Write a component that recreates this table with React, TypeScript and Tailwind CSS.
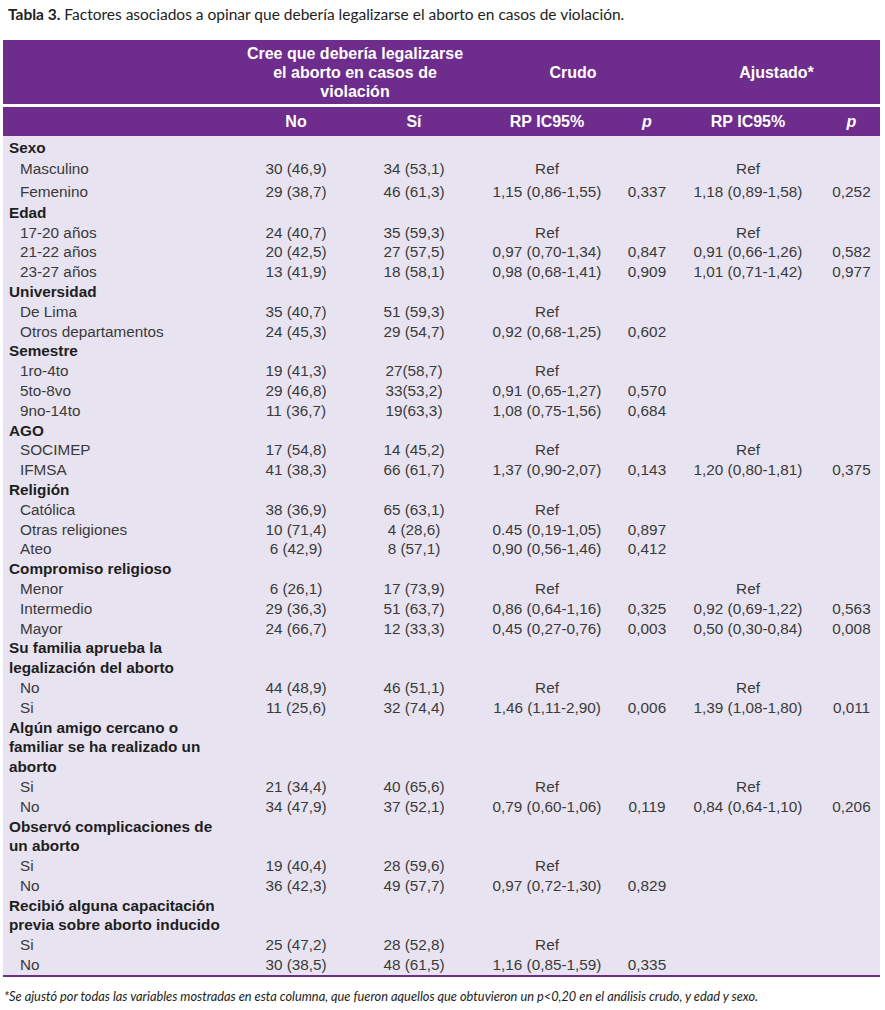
import React from 'react';

type Row =
  | { cat: string[] }
  | { label: string; no: string; si: string; rp1?: string; p1?: string; rp2?: string; p2?: string; h?: string };

const rows: Row[] = [
  { cat: ['Sexo'] },
  { label: 'Masculino', no: '30 (46,9)', si: '34 (53,1)', rp1: 'Ref', rp2: 'Ref', h: 'h-[23px]' },
  { label: 'Femenino', no: '29 (38,7)', si: '46 (61,3)', rp1: '1,15 (0,86-1,55)', p1: '0,337', rp2: '1,18 (0,89-1,58)', p2: '0,252', h: 'h-[22px]' },
  { cat: ['Edad'] },
  { label: '17-20 años', no: '24 (40,7)', si: '35 (59,3)', rp1: 'Ref', rp2: 'Ref' },
  { label: '21-22 años', no: '20 (42,5)', si: '27 (57,5)', rp1: '0,97 (0,70-1,34)', p1: '0,847', rp2: '0,91 (0,66-1,26)', p2: '0,582' },
  { label: '23-27 años', no: '13 (41,9)', si: '18 (58,1)', rp1: '0,98 (0,68-1,41)', p1: '0,909', rp2: '1,01 (0,71-1,42)', p2: '0,977' },
  { cat: ['Universidad'] },
  { label: 'De Lima', no: '35 (40,7)', si: '51 (59,3)', rp1: 'Ref' },
  { label: 'Otros departamentos', no: '24 (45,3)', si: '29 (54,7)', rp1: '0,92 (0,68-1,25)', p1: '0,602' },
  { cat: ['Semestre'] },
  { label: '1ro-4to', no: '19 (41,3)', si: '27(58,7)', rp1: 'Ref' },
  { label: '5to-8vo', no: '29 (46,8)', si: '33(53,2)', rp1: '0,91 (0,65-1,27)', p1: '0,570' },
  { label: '9no-14to', no: '11 (36,7)', si: '19(63,3)', rp1: '1,08 (0,75-1,56)', p1: '0,684' },
  { cat: ['AGO'] },
  { label: 'SOCIMEP', no: '17 (54,8)', si: '14 (45,2)', rp1: 'Ref', rp2: 'Ref' },
  { label: 'IFMSA', no: '41 (38,3)', si: '66 (61,7)', rp1: '1,37 (0,90-2,07)', p1: '0,143', rp2: '1,20 (0,80-1,81)', p2: '0,375' },
  { cat: ['Religión'] },
  { label: 'Católica', no: '38 (36,9)', si: '65 (63,1)', rp1: 'Ref' },
  { label: 'Otras religiones', no: '10 (71,4)', si: '4 (28,6)', rp1: '0.45 (0,19-1,05)', p1: '0,897' },
  { label: 'Ateo', no: '6 (42,9)', si: '8 (57,1)', rp1: '0,90 (0,56-1,46)', p1: '0,412' },
  { cat: ['Compromiso religioso'] },
  { label: 'Menor', no: '6 (26,1)', si: '17 (73,9)', rp1: 'Ref', rp2: 'Ref' },
  { label: 'Intermedio', no: '29 (36,3)', si: '51 (63,7)', rp1: '0,86 (0,64-1,16)', p1: '0,325', rp2: '0,92 (0,69-1,22)', p2: '0,563' },
  { label: 'Mayor', no: '24 (66,7)', si: '12 (33,3)', rp1: '0,45 (0,27-0,76)', p1: '0,003', rp2: '0,50 (0,30-0,84)', p2: '0,008' },
  { cat: ['Su familia aprueba la', 'legalización del aborto'] },
  { label: 'No', no: '44 (48,9)', si: '46 (51,1)', rp1: 'Ref', rp2: 'Ref' },
  { label: 'Si', no: '11 (25,6)', si: '32 (74,4)', rp1: '1,46 (1,11-2,90)', p1: '0,006', rp2: '1,39 (1,08-1,80)', p2: '0,011' },
  { cat: ['Algún amigo cercano o', 'familiar se ha realizado un', 'aborto'] },
  { label: 'Si', no: '21 (34,4)', si: '40 (65,6)', rp1: 'Ref', rp2: 'Ref' },
  { label: 'No', no: '34 (47,9)', si: '37 (52,1)', rp1: '0,79 (0,60-1,06)', p1: '0,119', rp2: '0,84 (0,64-1,10)', p2: '0,206' },
  { cat: ['Observó complicaciones de', 'un aborto'] },
  { label: 'Si', no: '19 (40,4)', si: '28 (59,6)', rp1: 'Ref' },
  { label: 'No', no: '36 (42,3)', si: '49 (57,7)', rp1: '0,97 (0,72-1,30)', p1: '0,829' },
  { cat: ['Recibió alguna capacitación', 'previa sobre aborto inducido'] },
  { label: 'Si', no: '25 (47,2)', si: '28 (52,8)', rp1: 'Ref' },
  { label: 'No', no: '30 (38,5)', si: '48 (61,5)', rp1: '1,16 (0,85-1,59)', p1: '0,335' },
];

const cols = 'grid grid-cols-[234px_118px_118px_148px_52px_150px_57px]';

export default function App() {
  return (
    <div className="w-[885px] h-[1010px] bg-white text-[#222]">
      <p className="pl-[8px] pt-[4px] h-[40px] text-[15.5px] leading-[20px] font-['Lato',sans-serif]">
        <span className="font-bold">Tabla 3.</span> Factores asociados a opinar que debería legalizarse el aborto en casos de violación.
      </p>

      <div className="ml-[3px] w-[877px] font-['Liberation_Sans',Arial,sans-serif]">
        {/* cabecera */}
        <div className={`${cols} h-[64px] bg-[#6e2c8c] text-white font-bold text-[16px] leading-[19px] items-center text-center`}>
          <div />
          <div className="col-span-2">
            Cree que debería legalizarse
            <br />
            el aborto en casos de
            <br />
            violación
          </div>
          <div className="col-span-2">Crudo</div>
          <div className="col-span-2">Ajustado*</div>
        </div>
        <div className={`${cols} mt-[3px] h-[29px] bg-[#6e2c8c] text-white font-bold text-[16px] items-center text-center`}>
          <div />
          <div>No</div>
          <div>Sí</div>
          <div>RP IC95%</div>
          <div className="italic">p</div>
          <div>RP IC95%</div>
          <div className="italic">p</div>
        </div>

        {/* cuerpo */}
        <div className="bg-[#e8e3f0] border-b-2 border-[#6e2c8c] text-[15.3px] leading-[19.8px] pt-[2px]">
          {rows.map((r, i) =>
            'cat' in r ? (
              <div key={i} className="pl-[6px] font-bold text-[#1e1e1e]">
                {r.cat.map((l) => (
                  <div key={l} className="h-[19.8px]">
                    {l}
                  </div>
                ))}
              </div>
            ) : (
              <div key={i} className={`${cols} ${r.h ?? 'h-[19.8px]'} items-center text-center text-[#3a3a3a]`}>
                <div className="pl-[17px] text-left">{r.label}</div>
                <div>{r.no}</div>
                <div>{r.si}</div>
                <div>{r.rp1}</div>
                <div>{r.p1}</div>
                <div>{r.rp2}</div>
                <div>{r.p2}</div>
              </div>
            ),
          )}
        </div>
      </div>

      <p className="pl-[4px] mt-[11px] text-[12.8px] leading-[16px] italic text-[#222] font-['Lato',sans-serif]">
        *Se ajustó por todas las variables mostradas en esta columna, que fueron aquellos que obtuvieron un p&lt;0,20 en el análisis crudo, y edad y sexo.
      </p>
    </div>
  );
}
